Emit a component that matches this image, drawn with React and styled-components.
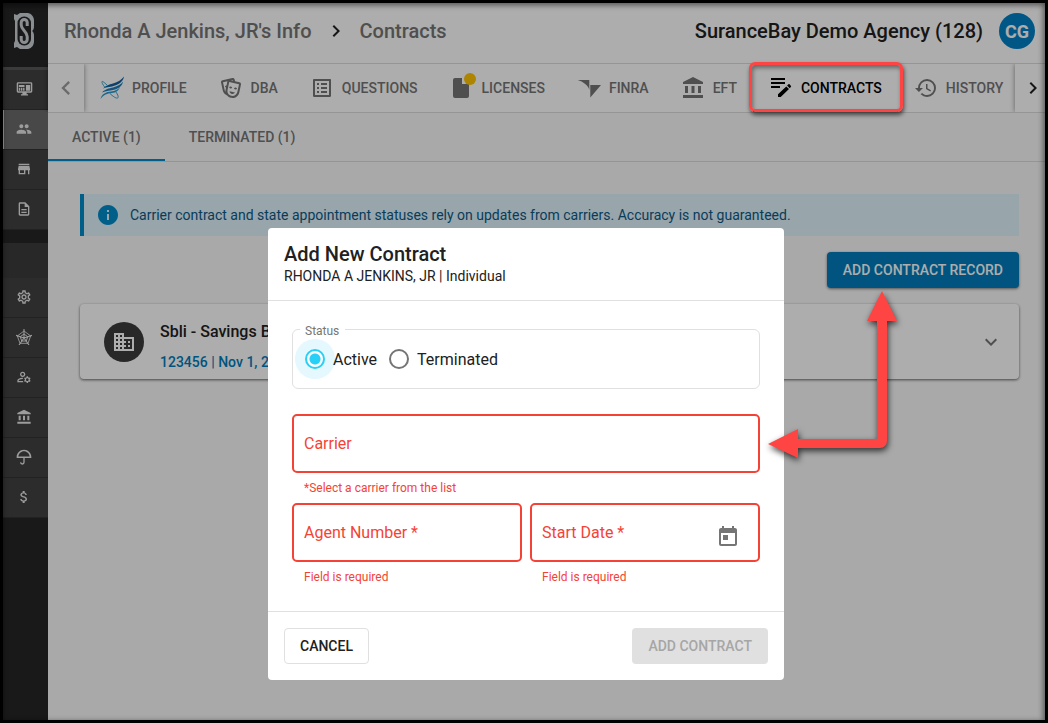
import React, { useState } from "react";
import styled, { createGlobalStyle, css } from "styled-components";
import {
  MdGroup, MdStore, MdOutlineDescription, MdOutlineSettings, MdOutlineManageAccounts,
  MdAccountBalance, MdAttachMoney, MdOutlineListAlt, MdHistory, MdChevronLeft,
  MdChevronRight, MdInfo, MdBusiness, MdExpandMore, MdToday,
} from "react-icons/md";

const GlobalStyle = createGlobalStyle`
  *, *::before, *::after { box-sizing: border-box; }
  body { margin: 0; font-family: Roboto, "Liberation Sans", sans-serif; font-size: 14px; color: #212121; }
  button, input { font: inherit; color: inherit; }
  button { border: 0; padding: 0; background: none; cursor: pointer; }
  h1, h2, h3, p { margin: 0; font: inherit; }
  a { color: inherit; text-decoration: none; }
`;

const Page = styled.div`
  position: relative;
  display: flex;
  min-height: 100vh;
  border: 3px solid #000;
  overflow: hidden;
  background: #fafafa;
`;

const Sidebar = styled.nav`
  flex: none;
  width: 45px;
  background: #262626;
`;

const LogoLink = styled.a`
  display: flex;
  justify-content: center;
  height: 67px;
  padding: 10px 3px 0 0;
  border-bottom: 3px solid #585858;
  color: #cdd2d6;
`;

const NavGroup = styled.div`
  padding-top: ${(p) => (p.$spaced ? "35px" : "0")};
  margin-bottom: 13px;
  background: #3c3c3c;
`;

const NavLink = styled.a`
  display: flex;
  align-items: center;
  justify-content: center;
  height: 40px;
  padding: 0 3px 2px 0;
  background: ${(p) => (p.$active ? "#6b6b6b" : "#424242")};
  border-bottom: 1px solid #333;
  box-shadow: ${(p) => (p.$active ? "inset 1px 0 #ddd" : "none")};
  color: #e6e6e6;
  font-size: 16px;
`;

const Main = styled.main`
  flex: 1;
  min-width: 0;
`;

const Header = styled.header`
  display: flex;
  align-items: center;
  justify-content: space-between;
  height: 61px;
  padding: 0 10px 4px 16px;
  background: #fff;
  border-bottom: 1px solid #dcdcdc;
  font-size: 20px;
  font-weight: 500;
`;

const Breadcrumb = styled.div`
  display: flex;
  align-items: center;
  gap: 12px;
  color: #757575;
  svg { color: #212121; }
`;

const Account = styled.div`
  display: flex;
  align-items: center;
  gap: 16px;
`;

const Avatar = styled.button`
  width: 36px;
  height: 36px;
  border-radius: 50%;
  background: #0081c6;
  color: #fff;
  font-size: 18px;
  font-weight: 700;
`;

const TabBar = styled.div`
  position: relative;
  display: flex;
  height: 49px;
  background: #fff;
  border-bottom: 1px solid #dcdcdc;
`;

const ScrollButton = styled.button`
  flex: none;
  display: flex;
  align-items: center;
  justify-content: center;
  position: relative;
  width: 36px;
  background: #fff;
  color: ${(p) => (p.$muted ? "#9e9e9e" : "#212121")};
  font-size: 28px;
  box-shadow: 0 0 5px rgba(0, 0, 0, 0.45);
  clip-path: inset(0 -8px);
  ${(p) => p.$end && css`width: 30px; margin-left: auto; padding-left: 6px;`}
`;

const TabStrip = styled.div`
  flex: 1;
  display: flex;
  width: 0;
`;

const Tab = styled.button`
  flex: none;
  position: relative;
  display: flex;
  align-items: center;
  gap: 8px;
  padding: 0 16px;
  color: ${(p) => (p.$active ? "#000" : "#757575")};
  font-weight: 500;
  border-bottom: 2px solid ${(p) => (p.$active ? "#212121" : "transparent")};
  border-top: 2px solid transparent;
  svg { width: 24px; height: 24px; }
`;

const Highlight = styled.span`
  position: absolute;
  inset: -4px -5px -2px -4px;
  z-index: 20;
  border: 3px solid #ff4444;
  border-radius: 6px;
  box-shadow: 1px 3px 4px rgba(0, 0, 0, 0.6), inset 1px 3px 4px rgba(0, 0, 0, 0.4);
  pointer-events: none;
`;

const SubTabs = styled.div`
  display: flex;
  height: 49px;
  border-bottom: 1px solid #dcdcdc;
`;

const SubTab = styled.button`
  padding: 0 24px;
  color: #757575;
  font-weight: 500;
  border-top: 2px solid transparent;
  border-bottom: 2px solid ${(p) => (p.$active ? "#008ccb" : "transparent")};
`;

const Content = styled.section`
  display: flex;
  flex-direction: column;
  gap: 16px;
  padding: 32px 26px 32px 32px;
`;

const Notice = styled.div`
  display: flex;
  align-items: center;
  gap: 10px;
  height: 42px;
  padding-left: 12px;
  background: #e1f3fd;
  border-left: 4px solid #008ccb;
  color: #0b5a86;
  svg { flex: none; color: #008ccb; font-size: 24px; }
`;

const Actions = styled.div`
  position: relative;
  display: flex;
  justify-content: flex-end;
`;

const Button = styled.button`
  height: 36px;
  padding: 0 16px;
  border-radius: 4px;
  font-weight: 500;
  ${(p) => p.$kind === "primary" && css`
    background: #007dbc;
    color: #fff;
    box-shadow: 0 1px 3px rgba(0, 0, 0, 0.5);
  `}
  ${(p) => p.$kind === "outline" && css`
    border: 1px solid #e0e0e0;
    padding: 0 15px;
  `}
  &:disabled { background: #e0e0e0; color: #a6a6a6; cursor: default; }
`;

const Arrow = styled.svg`
  position: absolute;
  top: 39px;
  right: 121px;
  z-index: 20;
  overflow: visible;
  filter: drop-shadow(1px 3px 3px rgba(0, 0, 0, 0.7));
  pointer-events: none;
`;

const Card = styled.article`
  display: flex;
  align-items: center;
  gap: 16px;
  height: 75px;
  padding: 0 8px 0 24px;
  background: #fff;
  border-radius: 4px;
  box-shadow: 0 1px 3px rgba(0, 0, 0, 0.6);
`;

const CardIcon = styled.span`
  display: flex;
  align-items: center;
  justify-content: center;
  width: 40px;
  height: 40px;
  border-radius: 50%;
  background: #3c3c3c;
  color: #fff;
  font-size: 24px;
`;

const CardText = styled.div`
  flex: 1;
  display: flex;
  flex-direction: column;
  gap: 10px;
  padding-top: 10px;
  line-height: 20px;
  font-weight: 500;
  h2 { font-size: 16px; }
  p { color: #007dbc; }
`;

const IconButton = styled.button`
  display: flex;
  align-items: center;
  justify-content: center;
  width: 40px;
  height: 40px;
  color: #757575;
  font-size: 24px;
`;

const Backdrop = styled.div`
  position: absolute;
  inset: 0;
  z-index: 10;
  display: flex;
  align-items: flex-start;
  justify-content: center;
  padding: 225px 0 0 4px;
  background: rgba(0, 0, 0, 0.32);
  box-shadow: inset 0 3px 5px rgba(0, 0, 0, 0.35), inset -3px 0 5px rgba(0, 0, 0, 0.25);
`;

const Dialog = styled.form`
  width: 516px;
  max-width: 100%;
  background: #fff;
  border-radius: 4px;
`;

const DialogHeader = styled.header`
  height: 73px;
  padding: 14px 16px 0;
  border-bottom: 1px solid #e0e0e0;
  h2 { font-size: 20px; line-height: 24px; font-weight: 500; }
  p { line-height: 20px; }
`;

const DialogBody = styled.div`
  padding: 19px 24px;
`;

const StatusGroup = styled.fieldset`
  display: flex;
  gap: 12px;
  height: 69px;
  margin: 0 0 25px;
  padding: 11px 12px 0;
  border: 1px solid #e0e0e0;
  border-radius: 6px;
  legend {
    margin-left: -5px;
    padding: 4px 6px 0 5px;
    line-height: 14px;
    font-size: 12px;
    color: #757575;
  }
`;

const RadioLabel = styled.label`
  display: flex;
  align-items: center;
  gap: 8px;
  height: 20px;
  font-size: 16px;
  input {
    appearance: none;
    width: 20px;
    height: 20px;
    margin: 0;
    border: 2px solid #757575;
    border-radius: 50%;
  }
  input:checked {
    border-color: #26d0f7;
    background: radial-gradient(circle, #26d0f7 5px, #fff 6px);
    background-color: #fff;
    box-shadow: 0 0 0 10px #e4f8fd;
  }
  span { position: relative; }
`;

const FieldRow = styled.div`
  display: flex;
  gap: 8px;
`;

const FieldBlock = styled.div`
  flex: 1;
  min-width: 0;
  color: #f44336;
`;

const FieldBox = styled.div`
  display: grid;
  grid-template-columns: 1fr auto;
  height: 59px;
  border: 2px solid #f44336;
  border-radius: 5px;
  label {
    grid-area: 1 / 1;
    align-self: center;
    padding-left: 10px;
    font-size: 16px;
    pointer-events: none;
  }
  input {
    grid-area: 1 / 1;
    width: 100%;
    min-width: 0;
    padding: 0 10px;
    border: 0;
    outline: 0;
    background: none;
    font-size: 16px;
    color: #212121;
  }
  ${IconButton} { align-self: end; margin: 0 10px 3px 0; }
`;

const Helper = styled.p`
  height: 30px;
  padding-left: 12px;
  font-size: 12px;
  line-height: 30px;
`;

const DialogFooter = styled.footer`
  display: flex;
  justify-content: space-between;
  padding: 16px;
  border-top: 1px solid #e0e0e0;
`;

function Svg({ size = 24, children, ...rest }) {
  return (
    <svg width={size} height={size} viewBox="0 0 24 24" fill="currentColor" aria-hidden="true" {...rest}>
      {children}
    </svg>
  );
}

const Logo = () => (
  <svg width="20" height="36" viewBox="0 0 20 36" fill="none" aria-hidden="true">
    <path d="M0 1 3 2 6 0H14C18 1 20 4 20 8V13C20 15.500 19.500 17 18 18 19.500 19 20 20.500 20 23V28C20 32 18 35 14 36H6L3 34 0 35V30L1 28V8L0 6z" fill="currentColor" />
    <rect x="3.500" y="3.500" width="13.500" height="29" rx="6.500" fill="#262626" />
    <path d="M13.200 13V9.500a3 3 0 0 0-6 0V12C7.200 17 13.200 18.500 13.200 23.500V26.500a3 3 0 0 1-6 0V23" stroke="currentColor" strokeWidth="3" />
  </svg>
);

const DashboardIcon = () => (
  <Svg size={17}>
    <path fillRule="evenodd" d="M3 3h18a2 2 0 0 1 2 2v11a2 2 0 0 1-2 2h-6v2h2v2H7v-2h2v-2H3a2 2 0 0 1-2-2V5a2 2 0 0 1 2-2zm0 2v11h18V5z" />
    <path d="M4 7h8v3H4zM4 11h2v4H4zM7 11h2v4H7zM10 11h2v4h-2zM14 7h6v8h-6z" />
  </Svg>
);

const StarWebIcon = () => (
  <Svg size={16} fill="none" stroke="currentColor" strokeLinejoin="round">
    <path d="M12 3 22 10.500 18 21.500H6L2 10.500z" strokeWidth="1.300" />
    <path d="M12 7.500 17.500 11.500 15.500 18H8.500L6.500 11.500z" strokeWidth="1.500" />
    <path d="M12 0V13.500M0 9.500 12 13.500 24 9.500M4.500 24 12 13.500 19.500 24" strokeWidth="1.600" />
  </Svg>
);

const UmbrellaIcon = () => (
  <Svg size={16}>
    <path fillRule="evenodd" d="M12 1C5.900 1 1 5.900 1 12v1.500h10V20a1.500 1.500 0 0 1-3 0H6a3.500 3.500 0 0 0 7 0v-6.500h10V12C23 5.900 18.100 1 12 1zm0 2.300c4.400 0 8 3.400 8.500 7.900h-17C4 6.700 7.600 3.300 12 3.300z" />
  </Svg>
);

const ProfileIcon = () => (
  <Svg fill="none" strokeLinecap="round">
    <path d="M3 12.500C6 9.500 9 8.500 13 7.500 18 6 21.500 4 24 .5 23 6 19 8 15 9.500 11 11 7 11 3 12.500z" fill="#155f9e" />
    <path d="M2 16.500C5 13 9 12.500 13 11.500 18 10 21 8.500 23 5.500 22 10.500 19 12 15 13.500 11 15 6 14.500 2 16.500z" fill="#1c7dbb" />
    <path d="M.5 23C2 17.500 6 16 11 15.500c4-.5 7-2 9-4.500-1.500 4-4 5.500-8 6-5 .5-8 1.500-11.500 6z" fill="#2a9ad0" />
    <path d="M8 10C5 7 2.500 5 2 5.500 1.500 6 2.500 8.500 5 11.500M10 17.500c3 3 6 5 7.500 4.500 1.500-.5.5-3-1.500-6" stroke="#35a5d8" strokeWidth="1" />
  </Svg>
);

const MasksIcon = () => (
  <Svg>
    <path d="M8.110,19.450C5.940,18.650 4.220,16.780 3.710,14.350L2.050,6.540C1.810,5.460 2.500,4.400 3.580,4.170L13.350,2.100L13.380,2.090C14.450,1.880 15.500,2.570 15.720,3.630L16.070,5.300L20.420,6.230H20.450C21.500,6.470 22.180,7.530 21.960,8.590L20.300,16.410C19.500,20.180 15.780,22.600 12,21.790C10.420,21.460 9.080,20.610 8.110,19.450V19.450M20,8.180L10.230,6.100L8.570,13.920V13.950C8,16.630 9.730,19.270 12.420,19.840C15.110,20.410 17.770,18.690 18.340,16L20,8.180M16,16.500C15.370,17.570 14.110,18.160 12.830,17.890C11.560,17.620 10.650,16.570 10.500,15.340L16,16.500M8.470,5.170L4,6.130L5.660,13.940L5.670,13.970C5.820,14.680 6.120,15.320 6.530,15.870C6.430,15.100 6.450,14.300 6.620,13.500L7.050,11.500C6.600,11.420 6.210,11.170 6,10.810C6.060,10.200 6.560,9.660 7.250,9.500C7.330,9.500 7.400,9.500 7.500,9.500L8.280,5.690C8.320,5.500 8.380,5.330 8.470,5.170M15.030,12.230C15.350,11.700 16.030,11.420 16.720,11.570C17.410,11.710 17.910,12.240 18,12.860C17.670,13.380 17,13.660 16.300,13.500C15.610,13.370 15.110,12.840 15.030,12.230M10.150,11.190C10.470,10.660 11.140,10.380 11.830,10.530C12.500,10.670 13.030,11.210 13.110,11.820C12.780,12.340 12.110,12.630 11.420,12.500C10.730,12.330 10.230,11.800 10.150,11.190M11.970,4.430L13.930,4.850L13.770,4.050L11.970,4.430Z" />
  </Svg>
);

const LicenseIcon = () => (
  <Svg overflow="visible">
    <path d="M5 2h7v6h7v12a2 2 0 0 1-2 2H5a2 2 0 0 1-2-2V4a2 2 0 0 1 2-2z" />
    <circle cx="20" cy="3" r="6" fill="#ffc400" />
  </Svg>
);

const FinraIcon = () => (
  <Svg>
    <path d="M.7 4H12.300V14C11.500 9.500 6 5.500.7 4zM13.300 9H24L13.300 21.500z" />
  </Svg>
);

const ContractIcon = () => (
  <Svg>
    <path d="M2,2V4H16V2H2M2,6V8H16V6H2M20,8C19.800,8 19.600,8.100 19.500,8.200L18.100,9.600L20.700,12.200L22,10.800C22.200,10.600 22.200,10.200 22,10L20.500,8.200C20.400,8.100 20.200,8 20,8M17.300,10.400L9,18.200V21H11.700L20,13L17.300,10.400M2,10V12H11V10H2Z" />
  </Svg>
);

const PRIMARY_NAV = [
  { label: "Dashboard", icon: DashboardIcon },
  { label: "Producers", icon: MdGroup, active: true },
  { label: "Agencies", icon: MdStore },
  { label: "Documents", icon: MdOutlineDescription },
];

const ADMIN_NAV = [
  { label: "Settings", icon: MdOutlineSettings },
  { label: "Hierarchy", icon: StarWebIcon },
  { label: "User management", icon: MdOutlineManageAccounts },
  { label: "Bank accounts", icon: MdAccountBalance },
  { label: "Insurance", icon: UmbrellaIcon },
  { label: "Billing", icon: MdAttachMoney },
];

const TABS = [
  { label: "PROFILE", icon: ProfileIcon },
  { label: "DBA", icon: MasksIcon },
  { label: "QUESTIONS", icon: MdOutlineListAlt },
  { label: "LICENSES", icon: LicenseIcon },
  { label: "FINRA", icon: FinraIcon },
  { label: "EFT", icon: MdAccountBalance },
  { label: "CONTRACTS", icon: ContractIcon, active: true },
  { label: "HISTORY", icon: MdHistory },
];

function NavItems({ items }) {
  return items.map(({ label, icon: Icon, active }) => (
    <NavLink key={label} href="#" aria-label={label} $active={active}>
      <Icon />
    </NavLink>
  ));
}

function Field({ id, label, helper, children }) {
  return (
    <FieldBlock>
      <FieldBox>
        <label htmlFor={id}>{label}</label>
        <input id={id} type="text" aria-describedby={`${id}-help`} aria-invalid="true" />
        {children}
      </FieldBox>
      <Helper id={`${id}-help`}>{helper}</Helper>
    </FieldBlock>
  );
}

function ContractDialog() {
  const [status, setStatus] = useState("Active");
  return (
    <Dialog role="dialog" aria-labelledby="dialog-title" onSubmit={(e) => e.preventDefault()}>
      <DialogHeader>
        <h2 id="dialog-title">Add New Contract</h2>
        <p>RHONDA A JENKINS, JR | Individual</p>
      </DialogHeader>
      <DialogBody>
        <StatusGroup>
          <legend>Status</legend>
          {["Active", "Terminated"].map((option) => (
            <RadioLabel key={option}>
              <input type="radio" name="status" checked={status === option} onChange={() => setStatus(option)} />
              <span>{option}</span>
            </RadioLabel>
          ))}
        </StatusGroup>
        <Field id="carrier" label="Carrier" helper="*Select a carrier from the list" />
        <FieldRow>
          <Field id="agent-number" label="Agent Number *" helper="Field is required" />
          <Field id="start-date" label="Start Date *" helper="Field is required">
            <IconButton type="button" aria-label="Choose date"><MdToday /></IconButton>
          </Field>
        </FieldRow>
      </DialogBody>
      <DialogFooter>
        <Button type="button" $kind="outline">CANCEL</Button>
        <Button type="submit" disabled>ADD CONTRACT</Button>
      </DialogFooter>
    </Dialog>
  );
}

export default function App() {
  return (
    <Page>
      <GlobalStyle />
      <Sidebar>
        <LogoLink href="#" aria-label="Home"><Logo /></LogoLink>
        <NavGroup><NavItems items={PRIMARY_NAV} /></NavGroup>
        <NavGroup $spaced><NavItems items={ADMIN_NAV} /></NavGroup>
      </Sidebar>
      <Main>
        <Header>
          <Breadcrumb>
            <a href="#">Rhonda A Jenkins, JR's Info</a>
            <MdChevronRight size={24} />
            <h1>Contracts</h1>
          </Breadcrumb>
          <Account>
            <span>SuranceBay Demo Agency (128)</span>
            <Avatar type="button">CG</Avatar>
          </Account>
        </Header>
        <TabBar>
          <ScrollButton $muted aria-label="Previous tabs"><MdChevronLeft /></ScrollButton>
          <TabStrip>
            {TABS.map(({ label, icon: Icon, active }) => (
              <Tab key={label} $active={active}>
                <Icon />
                {label}
                {active && <Highlight />}
              </Tab>
            ))}
          </TabStrip>
          <ScrollButton $end aria-label="More tabs"><MdChevronRight /></ScrollButton>
        </TabBar>
        <SubTabs>
          <SubTab $active>ACTIVE (1)</SubTab>
          <SubTab>TERMINATED (1)</SubTab>
        </SubTabs>
        <Content>
          <Notice>
            <MdInfo />
            <span>Carrier contract and state appointment statuses rely on updates from carriers. Accuracy is not guaranteed.</span>
          </Notice>
          <Actions>
            <Button type="button" $kind="primary">ADD CONTRACT RECORD</Button>
            <Arrow width="130" height="167" viewBox="0 0 130 167" fill="#ff4444" aria-hidden="true">
              <path d="M114 0 129 30H119V150a7 7 0 0 1-7 7H30V167L0 153 30 138V148H109V30H99z" />
            </Arrow>
          </Actions>
          <Card>
            <CardIcon><MdBusiness /></CardIcon>
            <CardText>
              <h2>Sbli - Savings Bank</h2>
              <p>123456 | Nov 1, 2023</p>
            </CardText>
            <IconButton type="button" aria-label="Expand contract"><MdExpandMore /></IconButton>
          </Card>
        </Content>
      </Main>
      <Backdrop>
        <ContractDialog />
      </Backdrop>
    </Page>
  );
}
